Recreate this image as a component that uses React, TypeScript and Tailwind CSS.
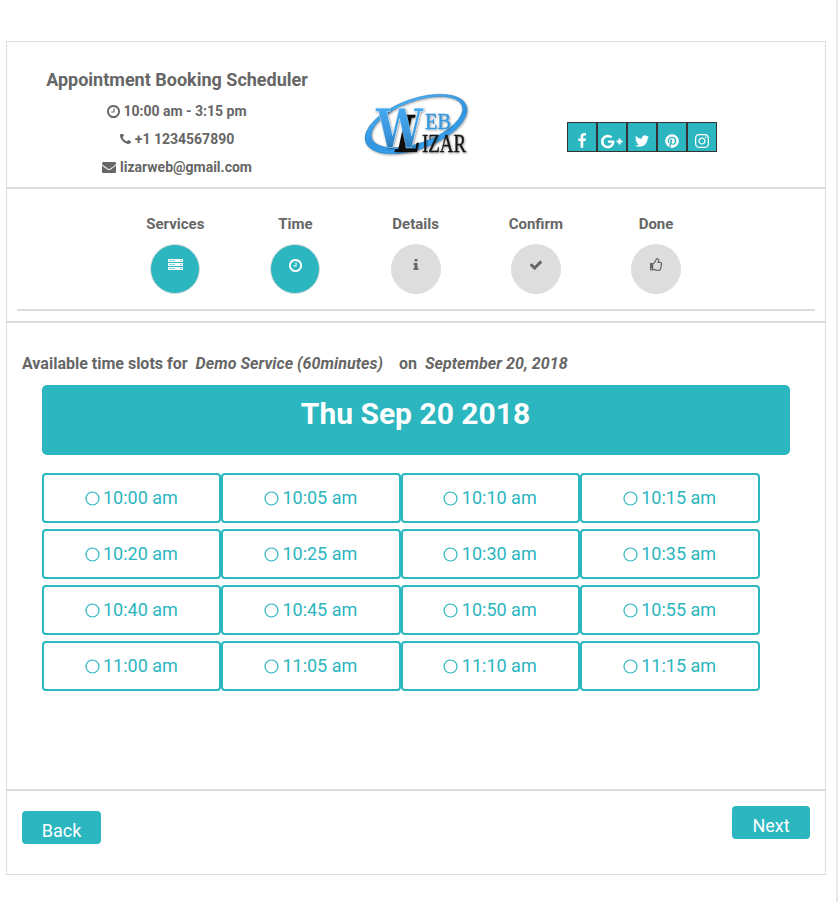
import React from 'react';
import { FaInstagram, FaPinterest, FaRegThumbsUp } from 'react-icons/fa';

type GlyphProps = { d: string; box?: string; className?: string };

const Glyph = ({ d, box = '0 0 1792 1792', className = '' }: GlyphProps) => (
  <svg viewBox={box} className={className} fill="currentColor">
    <path d={d} />
  </svg>
);

const CLOCK =
  'M896 544v448q0 14-9 23t-23 9h-320q-14 0-23-9t-9-23v-64q0-14 9-23t23-9h224v-352q0-14 9-23t23-9h64q14 0 23 9t9 23zm416 352q0-148-73-273t-198-198-273-73-273 73-198 198-73 273 73 273 198 198 273 73 273-73 198-198 73-273zm224 0q0 209-103 385.5t-279.5 279.5-385.5 103-385.5-103-279.5-279.5-103-385.5 103-385.5 279.5-279.5 385.5-103 385.5 103 279.5 279.5 103 385.5z';
const PHONE =
  'M1600 1240q0 27-10 70.5t-21 68.5q-21 50-122 106-94 51-186 51-27 0-53-3.5t-57.5-12.5-47-14.5-55.5-20.5-49-18q-98-35-175-83-127-79-264-216t-216-264q-48-77-83-175-3-9-18-49t-20.5-55.5-14.5-47-12.5-57.5-3.5-53q0-92 51-186 56-101 106-122 25-11 68.5-21t70.5-10q14 0 21 3 18 6 53 76 11 19 30 54t35 63.5 31 53.5q3 4 17.5 25t21.5 35.5 7 28.5q0 20-28.5 50t-62 55-62 53-28.5 46q0 9 5 22.5t8.5 20.5 14 24 11.5 19q76 137 174 235t235 174q2 1 19 11.5t24 14 20.5 8.5 22.5 5q18 0 46-28.5t53-62 55-62 50-28.5q14 0 28.5 7t35.5 21.5 25 17.5q25 15 53.5 31t63.5 35 54 30q70 35 76 53 3 7 3 21z';
const MAIL =
  'M1792 710v794q0 66-47 113t-113 47h-1472q-66 0-113-47t-47-113v-794q44 49 101 87 362 246 497 345 57 42 92.5 65.5t94.5 48 110 24.5h2q51 0 110-24.5t94.5-48 92.5-65.5q170-123 498-345 57-39 100-87zm0-294q0 79-49 151t-122 123q-376 261-468 325-10 7-42.5 31t-54 38.5-52 32.5-57.5 27-50 9h-2q-23 0-50-9t-57.5-27-52-32.5-54-38.5-42.5-31q-91-64-262-182.5t-205-142.5q-62-42-117-115.5t-55-136.5q0-78 41.5-130t118.5-52h1472q65 0 112.5 47t47.5 113z';
const FACEBOOK =
  'M1343 12v264h-157q-86 0-116 36t-30 108v189h293l-39 296h-254v759h-306v-759h-255v-296h255v-218q0-186 104-288.5t277-102.5q147 0 228 12z';
const GOOGLE =
  'M1437 913q0 208-87 370.5t-248 254-369 91.5q-149 0-285-58t-234-156-156-234-58-285 58-285 156-234 234-156 285-58q286 0 491 192l-199 191q-117-113-292-113-123 0-227.5 62t-165.5 168.5-61 232.5 61 232.5 165.5 168.5 227.5 62q83 0 152.5-23t114.5-57.5 78.5-78.5 49-83 21.5-74h-416v-252h692q12 63 12 122zm867-122v210h-209v209h-210v-209h-209v-210h209v-209h210v209h209z';
const TWITTER =
  'M1684 408q-67 98-162 167 1 14 1 42 0 130-38 259.5t-115.5 248.5-184.5 210.5-258 146-323 54.5q-271 0-496-145 35 4 78 4 225 0 401-138-105-2-188-64.5t-114-159.5q33 5 61 5 43 0 85-11-112-23-185.5-111.5t-73.5-205.5v-4q68 38 146 41-66-44-105-115t-39-154q0-88 44-163 121 149 294.5 238.5t371.5 99.5q-8-38-8-74 0-134 94.5-228.5t228.5-94.5q140 0 236 102 109-21 205-78-37 115-142 178 93-10 186-50z';
const INFO =
  'M1216 1344v128q0 26-19 45t-45 19h-512q-26 0-45-19t-19-45v-128q0-26 19-45t45-19h64v-384h-64q-26 0-45-19t-19-45v-128q0-26 19-45t45-19h384q26 0 45 19t19 45v576h64q26 0 45 19t19 45zm-128-1152v192q0 26-19 45t-45 19h-256q-26 0-45-19t-19-45v-192q0-26 19-45t45-19h256q26 0 45 19t19 45z';
const CHECK =
  'M1671 566q0 40-28 68l-724 724-136 136q-28 28-68 28t-68-28l-136-136-362-362q-28-28-28-68t28-68l136-136q28-28 68-28t68 28l294 295 656-657q28-28 68-28t68 28l136 136q28 28 28 68z';

const ServerIcon = () => (
  <svg viewBox="0 0 15 11" className="-mt-px h-[11px] w-[15px]" fill="none" shapeRendering="crispEdges">
    {[0, 4, 8].map((y) => (
      <g key={y}>
        <rect x="0" y={y} width="15" height="3" fill="#fff" />
        <rect x="1" y={y + 1} width="6" height="1" fill="#7fd3d9" />
        <rect x="12" y={y + 1} width="2" height="1" fill="#7fd3d9" />
      </g>
    ))}
  </svg>
);

const Logo = () => (
  <svg viewBox="0 0 125 80" className="h-20 w-[125px]">
    <defs>
      <linearGradient id="ring" x1="0" y1="0" x2="0" y2="1">
        <stop offset="0" stopColor="#45aef5" />
        <stop offset="0.55" stopColor="#3195e0" />
        <stop offset="1" stopColor="#36a2f0" />
      </linearGradient>
      <linearGradient id="letter" x1="0" y1="0" x2="0" y2="1">
        <stop offset="0" stopColor="#4ab4fb" />
        <stop offset="0.6" stopColor="#3a96dc" />
        <stop offset="1" stopColor="#1c619c" />
      </linearGradient>
      <filter id="shade" x="-20%" y="-20%" width="150%" height="150%">
        <feDropShadow dx="0.8" dy="1" stdDeviation="0.8" floodColor="#000" floodOpacity="0.4" />
      </filter>
    </defs>
    <g filter="url(#shade)">
      <path
        fillRule="evenodd"
        fill="url(#ring)"
        stroke="#2272b0"
        strokeWidth="0.4"
        transform="rotate(-20 61 39)"
        d="M7.5 39a53.5 25 0 1 0 107 0a53.5 25 0 1 0 -107 0zM14.5 37.5a48 21 0 1 0 96 0a48 21 0 1 0 -96 0z"
      />
    </g>
    <g filter="url(#shade)">
      <text x="38" y="67" fontSize="51" fontFamily="'DejaVu Serif', serif" fontWeight="bold" textLength="25" lengthAdjust="spacingAndGlyphs" fill="#111" transform="translate(14 0) skewX(-12)">
        L
      </text>
      <text x="21" y="62.5" fontSize="55" fontFamily="'DejaVu Serif', serif" fontWeight="bold" textLength="47" lengthAdjust="spacingAndGlyphs" fill="url(#letter)" stroke="#fff" strokeWidth="0.3">
        W
      </text>
      <g fontFamily="'Liberation Serif', serif">
        <text x="70" y="43.5" fontSize="24" textLength="26" lengthAdjust="spacingAndGlyphs" fill="#3798df" stroke="#3798df" strokeWidth="0.5">
          EB
        </text>
        <text x="67" y="67" fontSize="25" textLength="44" lengthAdjust="spacingAndGlyphs" fill="#171717" stroke="#171717" strokeWidth="0.4">
          IZAR
        </text>
      </g>
    </g>
  </svg>
);

const contacts = [
  { text: '10:00 am - 3:15 pm', icon: <Glyph d={CLOCK} box="0 128 1536 1536" className="h-[13px] w-[13px]" /> },
  { text: '+1 1234567890', icon: <Glyph d={PHONE} box="192 256 1408 1408" className="mr-px h-[11px] w-[11px]" /> },
  { text: 'lizarweb@gmail.com', icon: <Glyph d={MAIL} box="0 128 1792 1664" className="mr-px h-[13px] w-[14px]" /> },
];

const social = [
  <Glyph key="f" d={FACEBOOK} className="h-4 w-4" />,
  <Glyph key="g" d={GOOGLE} box="0 0 2304 1792" className="h-[17px] w-[21.5px]" />,
  <Glyph key="t" d={TWITTER} className="h-4 w-4" />,
  <FaPinterest key="p" className="h-3.5 w-3.5" />,
  <FaInstagram key="i" className="h-4 w-4" />,
];

const steps = [
  { label: 'Services', active: true, icon: <ServerIcon /> },
  { label: 'Time', active: true, icon: <Glyph d={CLOCK} box="0 128 1536 1536" className="h-[13px] w-[13px]" /> },
  { label: 'Details', active: false, icon: <Glyph d={INFO} className="h-3.5 w-3.5" /> },
  { label: 'Confirm', active: false, icon: <Glyph d={CHECK} className="h-3.5 w-3.5" /> },
  { label: 'Done', active: false, icon: <FaRegThumbsUp className="mb-0.5 h-[13px] w-[13px]" /> },
];

const slots = [
  '10:00 am', '10:05 am', '10:10 am', '10:15 am',
  '10:20 am', '10:25 am', '10:30 am', '10:35 am',
  '10:40 am', '10:45 am', '10:50 am', '10:55 am',
  '11:00 am', '11:05 am', '11:10 am', '11:15 am',
];

export default function App() {
  return (
    <div className="flex h-[902px] w-[838px] justify-between bg-white font-['Roboto',sans-serif] text-[#666]">
      <main className="ml-1.5 mt-[41px] flex h-[834px] w-[820px] flex-col border border-[#ddd]">
        <header className="flex h-[147px] shrink-0 border-b-2 border-[#ddd]">
          <div className="flex w-[340px] flex-col items-center pt-6">
            <h1 className="h-[31px] text-lg leading-7 font-bold">Appointment Booking Scheduler</h1>
            {contacts.map((c) => (
              <p key={c.text} className="flex h-7 items-center gap-[3px] text-sm font-bold">
                {c.icon}
                <span>{c.text}</span>
              </p>
            ))}
          </div>
          <div className="ml-2 pt-[43px]">
            <Logo />
          </div>
          <div className="mt-20 ml-[87px] flex h-[30px]">
            {social.map((icon, i) => (
              <a key={i} className="flex h-[30px] w-[30px] items-center justify-center border border-[#333] bg-[#2bb6c0] pt-2 text-white">
                {icon}
              </a>
            ))}
          </div>
        </header>

        <nav className="flex h-[134px] shrink-0 flex-col border-b-2 border-[#ddd] px-2.5">
          <div className="flex h-[122px] border-b-2 border-[#ddd] pt-[25px] pl-[98.2px]">
            {steps.map((s) => (
              <div key={s.label} className="flex w-[120.2px] flex-col items-center">
                <span className="h-[30px] text-[15px] leading-5 font-bold">{s.label}</span>
                <span
                  className={`flex h-[50px] w-[50px] justify-center rounded-full border border-[#ddd] ${
                    s.active ? 'bg-[#2bb6c0] text-white' : 'bg-[#ddd]'
                  }`}
                >
                  <span className="flex h-10 items-center">{s.icon}</span>
                </span>
              </div>
            ))}
          </div>
        </nav>

        <section className="h-[468px] shrink-0 border-b-2 border-[#ddd] pt-[31px] pl-[15px]">
          <h2 className="flex h-[31px] text-base leading-5 font-bold whitespace-pre">
            <span>Available time slots for  </span>
            <i className="tracking-[0.06px]">Demo Service (60minutes)</i>
            <span className="ml-4">on  </span>
            <i className="tracking-[0.06px]">September 20, 2018</i>
          </h2>
          <div className="ml-5 h-[70px] w-[748px] rounded-[5px] bg-[#2bb6c0] pt-[9px] pr-px text-center text-[30px] leading-10 font-bold text-white">
            Thu Sep 20 2018
          </div>
          <div className="mt-[18px] ml-5 grid w-[717.6px] grid-cols-4 gap-y-1.5">
            {slots.map((t) => (
              <button key={t} className="flex h-[50px] items-center justify-center gap-[3.5px] rounded border-2 border-[#2bb6c0] pr-[1px] text-lg text-[#2bb6c0]">
                <svg viewBox="0 0 15 15" className="h-[15px] w-[15px]" fill="none">
                  <circle cx="7.5" cy="7.5" r="6.5" stroke="currentColor" strokeWidth="1.2" />
                </svg>
                <span>{t}</span>
              </button>
            ))}
          </div>
        </section>

        <footer className="flex justify-between px-[15px]">
          <button className="mt-5 h-[33px] w-[79px] rounded bg-[#2bb6c0] pt-1.5 text-lg leading-[27px] text-white">Back</button>
          <button className="mt-[15px] h-[33px] w-[78px] rounded bg-[#2bb6c0] pt-1.5 text-lg leading-[27px] text-white">Next</button>
        </footer>
      </main>
      <div className="w-0.5 bg-[#e8e8e8]" />
    </div>
  );
}
